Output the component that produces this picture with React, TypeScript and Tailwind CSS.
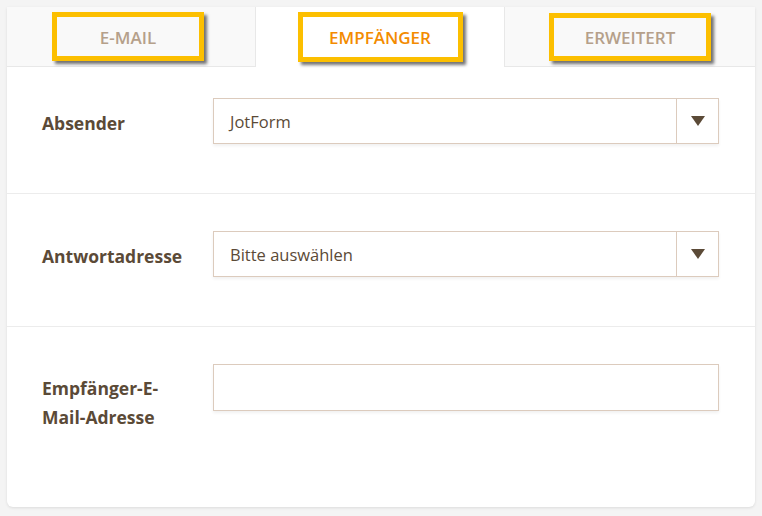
import React from "react";

const font = { fontFamily: '"Open Sans", "Noto Sans", sans-serif' };

function Arrow() {
  return (
    <svg width="14" height="10" viewBox="0 0 14 10">
      <polygon points="0,0 14,0 7,10" fill="#5b4a37" />
    </svg>
  );
}

function Select({ value }: { value: string }) {
  return (
    <div className="flex h-[46px] w-[506px] border border-[#dccbbd] bg-white shadow-[0_2px_3px_rgba(0,0,0,0.06)]">
      <div className="flex flex-1 items-center pl-4 pt-[2px] text-[16.5px] text-[#5b4a37]">{value}</div>
      <div className="flex w-[42px] items-center justify-center border-l border-[#dccbbd]">
        <Arrow />
      </div>
    </div>
  );
}

export default function App() {
  return (
    <div className="h-[516px] w-[762px] bg-[#f4f4f4] p-[7px]" style={font}>
      <div className="h-[500px] w-[748px] overflow-hidden rounded-b-[6px] bg-white shadow-[0_1px_3px_rgba(0,0,0,0.1)]">
        <div className="flex h-[60px]">
          <div className="flex w-[249px] items-center justify-center border-b border-r border-[#e8e8e8] bg-[#f9f9f9]">
            <span className="ml-[-6px] flex h-[49px] w-[152px] items-center justify-center border-[5px] border-[#fcbf00] pt-[2px] text-[17px] font-semibold text-[#b5a08a] shadow-[3px_3px_3px_rgba(0,0,0,0.55)]">
              E-MAIL
            </span>
          </div>
          <div className="flex w-[248px] items-center justify-center bg-white">
            <span className="flex h-[50px] w-[165px] items-center justify-center border-[5px] border-[#fcbf00] pt-[2px] text-[17px] font-semibold text-[#f38b00] shadow-[3px_3px_3px_rgba(0,0,0,0.55)]">
              EMPFÄNGER
            </span>
          </div>
          <div className="flex flex-1 items-center justify-center border-b border-l border-[#e8e8e8] bg-[#f9f9f9]">
            <span className="flex h-[48px] w-[162px] items-center justify-center border-[5px] border-[#fcbf00] pt-[2px] text-[17px] font-semibold text-[#b5a08a] shadow-[3px_3px_3px_rgba(0,0,0,0.55)]">
              ERWEITERT
            </span>
          </div>
        </div>

        <div className="flex h-[127px] items-start border-b border-[#ececec] pl-[35px] pt-[31px]">
          <div className="mt-[11px] w-[171px] text-[17.5px] font-bold leading-[28px] text-[#5b4a37]">Absender</div>
          <Select value="JotForm" />
        </div>

        <div className="flex h-[133px] items-start border-b border-[#ececec] pl-[35px] pt-[37px]">
          <div className="mt-[11px] w-[171px] text-[17.5px] font-bold leading-[28px] text-[#5b4a37]">Antwortadresse</div>
          <Select value="Bitte auswählen" />
        </div>

        <div className="flex items-start pl-[35px] pt-[37px]">
          <div className="mt-[10px] w-[171px] pr-6 text-[17.5px] font-bold leading-[29px] text-[#5b4a37]">
            Empfänger-E-Mail-Adresse
          </div>
          <div className="h-[47px] w-[506px] border border-[#dccbbd] bg-white shadow-[0_2px_3px_rgba(0,0,0,0.06)]" />
        </div>
      </div>
    </div>
  );
}
